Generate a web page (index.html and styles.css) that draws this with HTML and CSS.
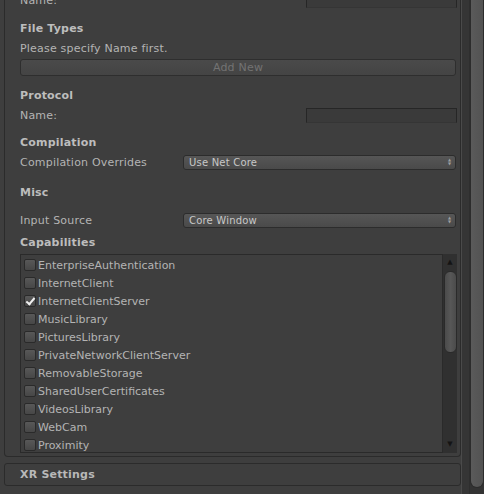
FILE: index.html
```html
<!DOCTYPE html>
<html lang="en">
<head>
    <meta charset="UTF-8">
    <title>Player Settings</title>
    <link rel="stylesheet" href="styles.css">
</head>
<body>
    <div class="window">
        <div class="inspector">
            <div class="settings-box">
                <div class="field-row row-cut">
                    <div class="label">Name:</div>
                    <div class="text-field"></div>
                </div>

                <div class="header header-first">File Types</div>
                <div class="label-line">Please specify Name first.</div>
                <div class="button disabled">Add New</div>

                <div class="header header-protocol">Protocol</div>
                <div class="field-row">
                    <div class="label">Name:</div>
                    <div class="text-field"></div>
                </div>

                <div class="header">Compilation</div>
                <div class="field-row">
                    <div class="label">Compilation Overrides</div>
                    <div class="popup">Use Net Core<span class="popup-arrows">&#9650;<br>&#9660;</span></div>
                </div>

                <div class="header header-misc">Misc</div>
                <div class="field-row row-input">
                    <div class="label">Input Source</div>
                    <div class="popup">Core Window<span class="popup-arrows">&#9650;<br>&#9660;</span></div>
                </div>

                <div class="header header-caps">Capabilities</div>
                <div class="list-box">
                    <div class="list-items">
                        <div class="toggle"><span class="check"></span>EnterpriseAuthentication</div>
                        <div class="toggle"><span class="check"></span>InternetClient</div>
                        <div class="toggle"><span class="check checked"></span>InternetClientServer</div>
                        <div class="toggle"><span class="check"></span>MusicLibrary</div>
                        <div class="toggle"><span class="check"></span>PicturesLibrary</div>
                        <div class="toggle"><span class="check"></span>PrivateNetworkClientServer</div>
                        <div class="toggle"><span class="check"></span>RemovableStorage</div>
                        <div class="toggle"><span class="check"></span>SharedUserCertificates</div>
                        <div class="toggle"><span class="check"></span>VideosLibrary</div>
                        <div class="toggle"><span class="check"></span>WebCam</div>
                        <div class="toggle"><span class="check"></span>Proximity</div>
                    </div>
                    <div class="list-scrollbar">
                        <div class="arrow">&#9650;</div>
                        <div class="thumb"></div>
                        <div class="arrow arrow-down">&#9660;</div>
                    </div>
                </div>
            </div>

            <div class="foldout">XR Settings</div>
        </div>
        <div class="groove"></div>
        <div class="window-scrollbar">
            <div class="window-thumb"></div>
        </div>
    </div>
</body>
</html>
```

FILE: styles.css
```css
body {
    margin: 0;
    background-color: #383838;
    font-family: 'DejaVu Sans', sans-serif;
    font-size: 11px;
    letter-spacing: 0.2px;
    color: #b4b4b4;
    overflow: hidden;
}

.window {
    display: flex;
    flex-direction: row;
    height: 494px;
}

.inspector {
    flex: 1;
    padding-left: 4px;
    background-color: #3e3e3e;
    display: flex;
    flex-direction: column;
}

.settings-box {
    border: 1px solid #2b2b2b;
    border-top: none;
    border-radius: 0 0 4px 4px;
    padding: 0 3px 3px 15px;
    display: flex;
    flex-direction: column;
}

.field-row {
    height: 18px;
    display: flex;
    flex-direction: row;
    align-items: center;
    justify-content: space-between;
    margin-top: 1px;
}

.row-cut {
    margin-top: -8px;
    height: 17px;
}

.row-input {
    margin-top: 9px;
}

.text-field {
    box-sizing: border-box;
    width: 151px;
    height: 15px;
    background-color: #3a3a3a;
    border: 1px solid #262626;
    border-bottom-color: #353535;
}

.header {
    height: 18px;
    line-height: 18px;
    font-weight: bold;
    color: #bdbdbd;
    margin-top: 10px;
}

.header-first {
    margin-top: 11px;
}

.header-protocol {
    margin-top: 11px;
}

.header-misc {
    margin-top: 13px;
}

.header-caps {
    margin-top: 5px;
}

.label-line {
    height: 18px;
    line-height: 18px;
    margin-top: 2px;
}

.button {
    box-sizing: border-box;
    height: 17px;
    margin-top: 1px;
    margin-right: 1px;
    border: 1px solid #2e2e2e;
    border-radius: 3px;
    background: linear-gradient(#4a4a4a, #444444);
    text-align: center;
    line-height: 15px;
}

.button.disabled {
    color: #737373;
}

.popup {
    position: relative;
    box-sizing: border-box;
    width: 273px;
    height: 15px;
    margin-right: 1px;
    padding-left: 5px;
    border: 1px solid #2c2c2c;
    border-radius: 3px;
    background: linear-gradient(#565656, #4a4a4a);
    font-size: 10px;
    line-height: 13px;
    color: #c8c8c8;
}

.popup-arrows {
    position: absolute;
    right: 4px;
    top: 2px;
    font-size: 4px;
    line-height: 4px;
    letter-spacing: 0;
    color: #a0a0a0;
}

.list-box {
    margin-top: 2px;
    height: 199px;
    display: flex;
    flex-direction: row;
}

.list-items {
    flex: 1;
    border: 1px solid #2a2a2a;
    padding: 1px 0 0 3px;
    overflow: hidden;
    letter-spacing: 0;
}

.toggle {
    height: 18px;
    display: flex;
    flex-direction: row;
    align-items: center;
    gap: 2px;
}

.check {
    box-sizing: border-box;
    width: 12px;
    height: 12px;
    border: 1px solid #2a2a2a;
    border-radius: 2px;
    background: linear-gradient(#585858, #474747);
    position: relative;
}

.check.checked::after {
    content: "";
    position: absolute;
    left: 3px;
    top: 0px;
    width: 3px;
    height: 7px;
    border: solid #f0f0f0;
    border-width: 0 2px 2px 0;
    transform: rotate(40deg);
}

.list-scrollbar {
    width: 14px;
    background-color: #303030;
    display: flex;
    flex-direction: column;
    align-items: center;
}

.arrow {
    height: 17px;
    font-size: 7px;
    line-height: 17px;
    color: #141414;
}

.arrow-down {
    margin-top: auto;
}

.thumb {
    box-sizing: border-box;
    width: 13px;
    height: 82px;
    border: 1px solid #2a2a2a;
    border-radius: 6px;
    background: linear-gradient(90deg, #4b4b4b, #575757, #4b4b4b);
}

.foldout {
    box-sizing: border-box;
    margin-top: 6px;
    height: 23px;
    border: 1px solid #2b2b2b;
    border-radius: 3px;
    padding-left: 15px;
    line-height: 21px;
    font-weight: bold;
    color: #b8b8b8;
}

.groove {
    width: 7px;
    background-color: #353535;
    border-left: 1px solid #4a4a4a;
    border-right: 1px solid #2e2e2e;
}

.window-scrollbar {
    width: 14px;
    background-color: #333333;
}

.window-thumb {
    box-sizing: border-box;
    height: 488px;
    border: 1px solid #2c2c2c;
    border-top: none;
    border-radius: 0 0 7px 7px;
    background: linear-gradient(90deg, #5a5a5a, #525252);
}
```
